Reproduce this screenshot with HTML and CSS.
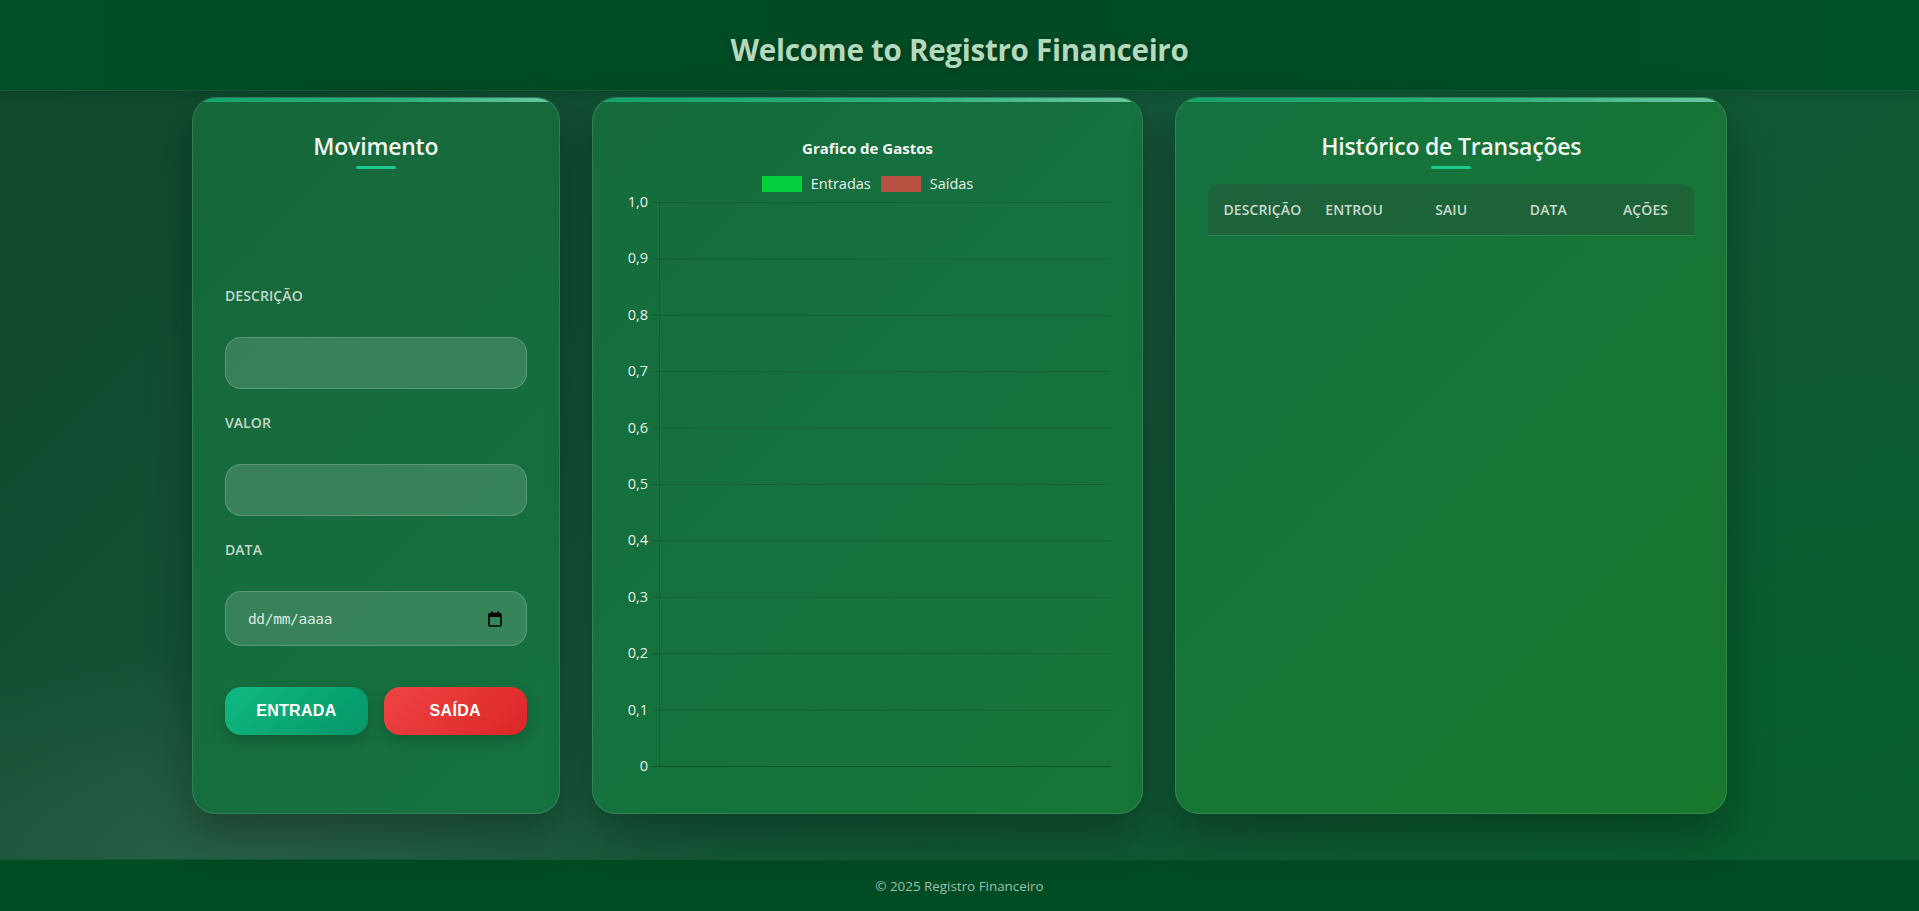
FILE: index.html
```html
<!DOCTYPE html>
<html lang="pt-BR">
<head>
<meta charset="utf-8">
<title>Registro Financeiro</title>
<link rel="stylesheet" href="styles.css">
</head>
<body>
<header class="site-header">
  <h1 class="site-title">Welcome to Registro Financeiro</h1>
</header>
<main class="dashboard">
  <section class="card form-card">
    <h2 class="card-title">Movimento</h2>
    <span class="title-bar"></span>
    <form class="move-form">
      <div class="field">
        <label class="field-label">Descrição</label>
        <input class="field-input" type="text">
      </div>
      <div class="field">
        <label class="field-label">Valor</label>
        <input class="field-input" type="text">
      </div>
      <div class="field">
        <label class="field-label">Data</label>
        <div class="field-input date-input">
          <span class="date-text">dd/mm/aaaa</span>
          <svg class="cal-icon" width="14" height="16" viewBox="0 0 14 16"><rect x="1" y="2.5" width="12" height="12.5" rx="1" fill="none" stroke="#000" stroke-width="1.6"/><rect x="1" y="2.5" width="12" height="3.5" fill="#000"/><rect x="3" y="0.5" width="1.6" height="3" fill="#000"/><rect x="9.4" y="0.5" width="1.6" height="3" fill="#000"/></svg>
        </div>
      </div>
      <div class="btn-row">
        <button type="button" class="btn btn-in">ENTRADA</button>
        <button type="button" class="btn btn-out">SAÍDA</button>
      </div>
    </form>
  </section>

  <section class="card chart-card">
    <h3 class="chart-title">Grafico de Gastos</h3>
    <div class="legend">
      <span class="legend-box box-in"></span><span class="legend-text">Entradas</span>
      <span class="legend-box box-out"></span><span class="legend-text">Saídas</span>
    </div>
    <svg class="chart-svg" width="486" height="585" viewBox="0 0 486 585">
      <g stroke="rgba(0,0,0,0.13)" stroke-width="1">
        <line x1="27" y1="9.5" x2="486" y2="9.5"/>
        <line x1="27" y1="65.9" x2="486" y2="65.9"/>
        <line x1="27" y1="122.3" x2="486" y2="122.3"/>
        <line x1="27" y1="178.7" x2="486" y2="178.7"/>
        <line x1="27" y1="235.1" x2="486" y2="235.1"/>
        <line x1="27" y1="291.5" x2="486" y2="291.5"/>
        <line x1="27" y1="347.9" x2="486" y2="347.9"/>
        <line x1="27" y1="404.3" x2="486" y2="404.3"/>
        <line x1="27" y1="460.7" x2="486" y2="460.7"/>
        <line x1="27" y1="517.1" x2="486" y2="517.1"/>
        <line x1="34.5" y1="9" x2="34.5" y2="573.5"/>
      </g>
      <line x1="27" y1="573.5" x2="486" y2="573.5" stroke="rgba(0,0,0,0.25)" stroke-width="1"/>
      <g class="axis-labels" text-anchor="end">
        <text x="23" y="14">1,0</text>
        <text x="23" y="70.4">0,9</text>
        <text x="23" y="126.8">0,8</text>
        <text x="23" y="183.2">0,7</text>
        <text x="23" y="239.6">0,6</text>
        <text x="23" y="296">0,5</text>
        <text x="23" y="352.4">0,4</text>
        <text x="23" y="408.8">0,3</text>
        <text x="23" y="465.2">0,2</text>
        <text x="23" y="521.6">0,1</text>
        <text x="23" y="578">0</text>
      </g>
    </svg>
  </section>

  <section class="card history-card">
    <h2 class="card-title">Histórico de Transações</h2>
    <span class="title-bar"></span>
    <table class="history-table">
      <thead>
        <tr>
          <th>Descrição</th>
          <th>Entrou</th>
          <th>Saiu</th>
          <th>Data</th>
          <th>Ações</th>
        </tr>
      </thead>
      <tbody></tbody>
    </table>
  </section>
</main>
<footer class="site-footer">© 2025 Registro Financeiro</footer>
</body>
</html>
```

FILE: styles.css
```css
* { box-sizing: border-box; }

html, body { margin: 0; padding: 0; }

body {
  min-height: 100vh;
  display: flex;
  flex-direction: column;
  font-family: "Open Sans", "Noto Sans", sans-serif;
  color: #fff;
  background:
    radial-gradient(ellipse 700px 300px at 250px 860px, rgba(70, 110, 90, 0.45), transparent 70%),
    radial-gradient(ellipse 900px 500px at 1800px 700px, rgba(0, 100, 40, 0.5), transparent 70%),
    linear-gradient(135deg, #0f472c 0%, #14563a 45%, #0a5a2e 100%);
}

.site-header {
  height: 91px;
  padding-top: 8px;
  display: flex;
  align-items: center;
  justify-content: center;
  background: linear-gradient(90deg, #004f26 0%, #004b24 50%, #00502a 100%);
  border-bottom: 1px solid rgba(255, 255, 255, 0.08);
  box-shadow: 0 2px 10px rgba(0, 0, 0, 0.15);
}

.site-title {
  margin: 0;
  font-size: 29.6px;
  font-weight: 700;
  color: #b3d9bd;
  letter-spacing: -0.3px;
  text-shadow: 0 2px 6px rgba(0, 0, 0, 0.35);
}

.dashboard {
  flex: 1;
  width: 80%;
  margin: 0 auto;
  padding-top: 6px;
  display: grid;
  grid-template-columns: 2fr 3fr 3fr;
  gap: 32px;
  align-items: start;
}

.card {
  position: relative;
  height: 717px;
  border-radius: 24px;
  overflow: hidden;
  background: linear-gradient(135deg, #176438 0%, #15713f 45%, #187a2a 100%) fixed;
  border: 1px solid rgba(255, 255, 255, 0.12);
  box-shadow: 0 20px 45px rgba(0, 0, 0, 0.3);
  padding: 33px 32px 32px;
  display: flex;
  flex-direction: column;
}

.card::before {
  content: "";
  position: absolute;
  top: 0;
  left: 0;
  right: 0;
  height: 4px;
  background: linear-gradient(90deg, #10a56a 0%, #2fb47d 60%, #6cc9a0 100%);
}

.card-title {
  margin: 0;
  text-align: center;
  font-size: 23px;
  font-weight: 600;
  line-height: 31px;
  color: #f1f6f2;
  letter-spacing: -0.2px;
}

.title-bar {
  display: block;
  width: 40px;
  height: 3px;
  border-radius: 2px;
  margin: 4px auto 0;
  background: #1fc98c;
}

.move-form {
  margin-top: 118px;
  display: flex;
  flex-direction: column;
}

.field {
  display: flex;
  flex-direction: column;
  margin-bottom: 25px;
}

.field-label {
  font-size: 14px;
  font-weight: 600;
  line-height: 18px;
  text-transform: uppercase;
  color: #c5d8cb;
  letter-spacing: 0.1px;
  margin-bottom: 32px;
}

.field-input {
  height: 52px;
  width: 100%;
  border-radius: 16px;
  border: 1px solid rgba(255, 255, 255, 0.18);
  background: rgba(255, 255, 255, 0.15);
  color: #fff;
  font-family: inherit;
  font-size: 15px;
  padding: 0 20px;
  outline: none;
}

.date-input {
  height: 55px;
  display: flex;
  align-items: center;
  justify-content: space-between;
  padding: 0 22px 0 22px;
}

.date-text {
  font-family: "DejaVu Sans Mono", "Liberation Mono", monospace;
  font-size: 14.5px;
  color: #dce9e0;
  letter-spacing: -0.3px;
}

.cal-icon { display: block; margin-right: 2px; }

.btn-row {
  margin-top: 16px;
  display: grid;
  grid-template-columns: 1fr 1fr;
  gap: 16px;
}

.btn {
  height: 48px;
  border: none;
  border-radius: 16px;
  font-family: "Liberation Sans", Arial, sans-serif;
  font-size: 16px;
  font-weight: 700;
  letter-spacing: 0.3px;
  color: #fff;
  cursor: pointer;
}

.btn-in {
  background: linear-gradient(135deg, #10b981 0%, #059669 100%);
  box-shadow: 0 6px 14px rgba(0, 0, 0, 0.18);
}

.btn-out {
  background: linear-gradient(135deg, #ef4444 0%, #dc2626 100%);
  box-shadow: 0 6px 14px rgba(0, 0, 0, 0.18);
}

.chart-title {
  margin: 7px 0 0;
  text-align: center;
  font-size: 15px;
  font-weight: 700;
  line-height: 20px;
  color: #f4f8f5;
}

.legend {
  margin-top: 18px;
  display: flex;
  align-items: center;
  justify-content: center;
  height: 16px;
}

.legend-box {
  width: 40px;
  height: 16px;
  display: block;
}

.box-in { background: #05d13f; }
.box-out { background: #b95142; margin-left: 10px; }

.legend-text {
  margin-left: 9px;
  font-size: 14.5px;
  color: #e9f2ec;
  line-height: 16px;
}

.chart-svg {
  display: block;
  margin-top: 1px;
}

.axis-labels text {
  font-family: "Open Sans", "Noto Sans", sans-serif;
  font-size: 14.5px;
  fill: #e6f0e9;
}

.history-table {
  margin-top: 15px;
  width: 100%;
  table-layout: fixed;
  border-collapse: collapse;
}

.history-table thead tr {
  background: rgba(40, 80, 55, 0.45);
}

.history-table th {
  height: 51px;
  padding: 0 15px;
  text-align: center;
  font-size: 14px;
  font-weight: 600;
  text-transform: uppercase;
  color: #c9dacd;
  letter-spacing: 0.1px;
  border-bottom: 1px solid rgba(255, 255, 255, 0.1);
  white-space: nowrap;
}

.history-table th:first-child { border-top-left-radius: 12px; }
.history-table th:last-child { border-top-right-radius: 12px; }

.site-footer {
  height: 52px;
  display: flex;
  align-items: center;
  justify-content: center;
  background: #004c24;
  border-top: 1px solid rgba(255, 255, 255, 0.08);
  font-size: 13.4px;
  color: #9fbfaa;
}
```
